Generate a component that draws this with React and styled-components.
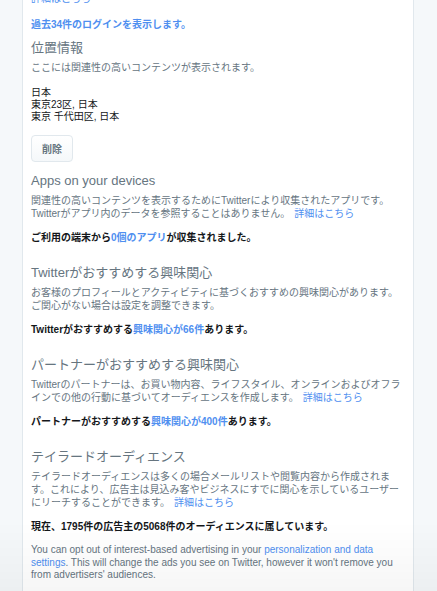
import React from "react";
import styled, { createGlobalStyle } from "styled-components";

const GlobalStyle = createGlobalStyle`
    html, body {
        margin: 0;
        padding: 0;
        background: #f5f8fa;
        overflow: hidden;
    }
    body {
        font-family: "Liberation Sans", "Noto Sans CJK JP", sans-serif;
        font-size: 10px;
        color: #66757f;
    }
`;

const Card = styled.div`
    margin: -8px 0 0 22px;
    width: 392px;
    box-sizing: border-box;
    min-height: 620px;
    padding: 0 8px 40px;
    background: #fff;
    border-left: 1px solid #e1e8ed;
    border-right: 1px solid #e1e8ed;
`;

const Link = styled.a`
    color: #4f8ff0;
    text-decoration: none;
    font-weight: ${(p) => (p.$bold ? 700 : 400)};
`;

const LinkLine = styled.div`
    line-height: 13px;
    margin-top: ${(p) => p.$top || 0}px;
`;

const Section = styled.section`
    margin-top: ${(p) => p.$top ?? 20}px;
`;

const Heading = styled.h2`
    margin: 0 0 4px;
    font-size: 13px;
    line-height: 18px;
    font-weight: 400;
    color: #66757f;
`;

const Desc = styled.p`
    margin: 0;
    font-size: 10px;
    line-height: 13px;
    color: #66757f;
`;

const Spacer = styled.span`
    display: inline-block;
    width: 4px;
`;

const Places = styled.ul`
    list-style: none;
    margin: 13px 0 0;
    padding: 0;
    li {
        font-size: 10px;
        line-height: 12px;
        color: #14171a;
    }
`;

const Button = styled.button`
    display: block;
    margin-top: 12px;
    height: 27px;
    padding: 0 10px;
    font-family: inherit;
    font-size: 10px;
    font-weight: 700;
    color: #66757f;
    background: linear-gradient(#fff, #f5f8fa);
    border: 1px solid #e1e8ed;
    border-radius: 4px;
    cursor: pointer;
`;

const Summary = styled.p`
    margin: 11px 0 0;
    font-size: 10px;
    line-height: 13px;
    font-weight: 700;
    color: #14171a;
`;

const Note = styled.p`
    margin: 11px 0 0;
    font-size: 10px;
    line-height: 12.5px;
    color: #66757f;
`;

const BottomFade = styled.div`
    position: fixed;
    left: 0;
    right: 0;
    bottom: 0;
    height: 70px;
    pointer-events: none;
    background: linear-gradient(rgba(0, 0, 0, 0), rgba(0, 0, 0, 0.035));
`;

const More = () => (
    <>
        <Spacer />
        <Link href="#">詳細はこちら</Link>
    </>
);

export default function App() {
    return (
        <>
            <GlobalStyle />
            <Card>
                <LinkLine>
                    <Link href="#">詳細はこちら</Link>
                </LinkLine>
                <LinkLine $top={13}>
                    <Link href="#" $bold>過去34件のログインを表示します。</Link>
                </LinkLine>

                <Section $top={8}>
                    <Heading>位置情報</Heading>
                    <Desc>ここには関連性の高いコンテンツが表示されます。</Desc>
                    <Places>
                        <li>日本</li>
                        <li>東京23区, 日本</li>
                        <li>東京 千代田区, 日本</li>
                    </Places>
                    <Button>削除</Button>
                </Section>

                <Section $top={10}>
                    <Heading>Apps on your devices</Heading>
                    <Desc>
                        関連性の高いコンテンツを表示するためにTwitterにより収集されたアプリです。Twitterがアプリ内のデータを参照することはありません。
                        <More />
                    </Desc>
                    <Summary>
                        ご利用の端末から<Link href="#" $bold>0個のアプリ</Link>が収集されました。
                    </Summary>
                </Section>

                <Section>
                    <Heading>Twitterがおすすめする興味関心</Heading>
                    <Desc>
                        お客様のプロフィールとアクティビティに基づくおすすめの興味関心があります。ご関心がない場合は設定を調整できます。
                    </Desc>
                    <Summary>
                        Twitterがおすすめする<Link href="#" $bold>興味関心が66件</Link>あります。
                    </Summary>
                </Section>

                <Section>
                    <Heading>パートナーがおすすめする興味関心</Heading>
                    <Desc>
                        Twitterのパートナーは、お買い物内容、ライフスタイル、オンラインおよびオフラインでの他の行動に基づいてオーディエンスを作成します。
                        <More />
                    </Desc>
                    <Summary>
                        パートナーがおすすめする<Link href="#" $bold>興味関心が400件</Link>あります。
                    </Summary>
                </Section>

                <Section>
                    <Heading>テイラードオーディエンス</Heading>
                    <Desc>
                        テイラードオーディエンスは多くの場合メールリストや閲覧内容から作成されます。これにより、広告主は見込み客やビジネスにすでに関心を示しているユーザーにリーチすることができます。
                        <More />
                    </Desc>
                    <Summary>現在、1795件の広告主の5068件のオーディエンスに属しています。</Summary>
                    <Note>
                        You can opt out of interest-based advertising in your{" "}
                        <Link href="#">personalization and data settings</Link>. This will change the ads you see on
                        Twitter, however it won't remove you from advertisers' audiences.
                    </Note>
                </Section>
            </Card>
            <BottomFade />
        </>
    );
}
